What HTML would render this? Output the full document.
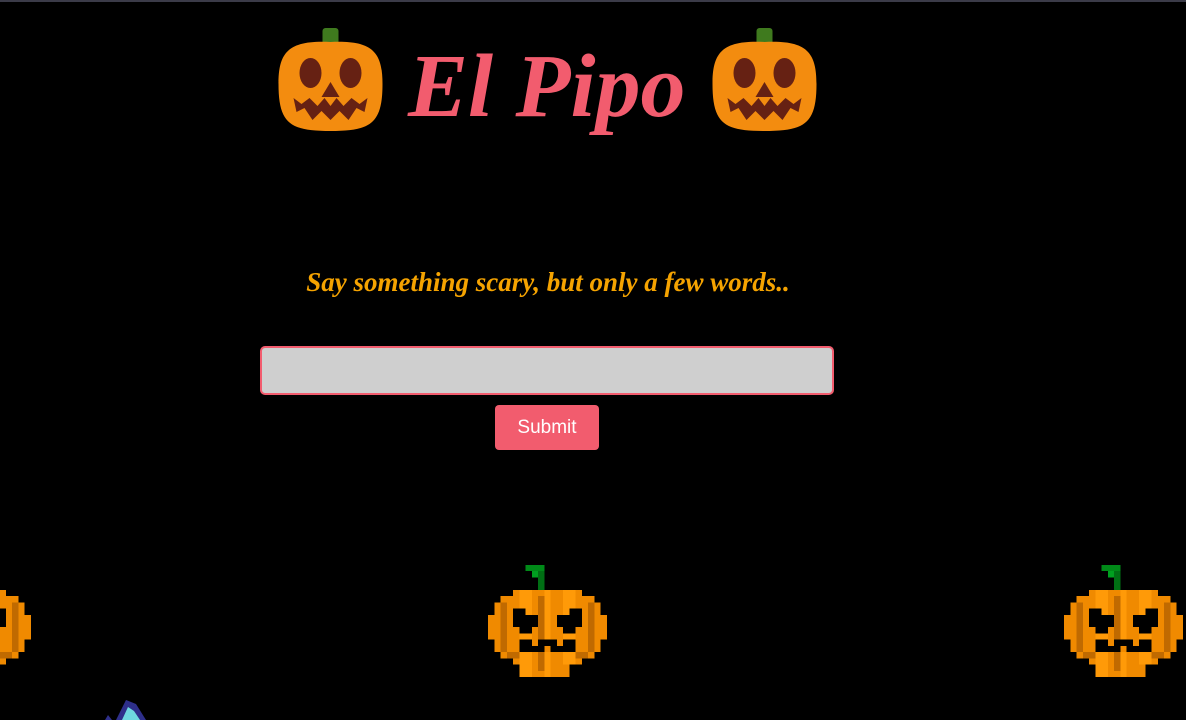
<!DOCTYPE html>
<html><head><meta charset="utf-8"><style>
html,body{margin:0;padding:0;background:#000;width:1186px;height:720px;overflow:hidden;position:relative;font-family:"Liberation Sans",sans-serif}
.top{position:absolute;left:0;top:0;width:1186px;height:2px;background:#3b3b48}
.t{position:absolute;left:408px;top:42px;font-family:"Liberation Serif",serif;font-style:italic;font-weight:bold;font-size:90px;color:#f25c6e;line-height:1;white-space:nowrap}
.sub{position:absolute;left:0;width:1096px;text-align:center;top:267px;font-family:"Liberation Serif",serif;font-style:italic;font-weight:bold;font-size:27px;color:#f5a300}
.inp{position:absolute;left:260px;top:346px;width:570px;height:45px;background:#cfcfcf;border:2px solid #f25c6e;border-radius:5px}
.btn{position:absolute;left:495px;top:405px;width:104px;height:45px;background:#f25c6e;border-radius:4px;color:#fff;font-size:19px;text-align:center;line-height:46px}
.pk{position:absolute;width:119px;height:112px;top:565px}
.em{position:absolute;top:28px;width:105px;height:104px}
</style></head><body>
<div class="top"></div>
<svg width="0" height="0" style="position:absolute">
<defs>
<g id="pump">
<rect x="6" y="0" width="3" height="1" fill="#008a18"/>
<rect x="8" y="1" width="1" height="3" fill="#006f14"/>
<rect x="7" y="1" width="1" height="1" fill="#00a020"/>
<g fill="#f08a00">
<rect x="4" y="4" width="11" height="1"/><rect x="2" y="5" width="15" height="1"/>
<rect x="1" y="6" width="17" height="2"/><rect x="0" y="8" width="19" height="4"/>
<rect x="1" y="12" width="17" height="2"/><rect x="2" y="14" width="15" height="1"/>
<rect x="4" y="15" width="11" height="1"/><rect x="6" y="16" width="7" height="2"/>
</g>
<g fill="#ff9a08">
<rect x="5" y="4" width="2" height="14"/><rect x="9" y="4" width="1" height="14"/><rect x="12" y="4" width="2" height="12"/>
</g>
<g fill="#c06a00">
<rect x="2" y="6" width="1" height="8"/><rect x="16" y="6" width="1" height="8"/><rect x="8" y="5" width="1" height="12"/>
<rect x="3" y="14" width="2" height="1"/><rect x="14" y="14" width="2" height="1"/>
</g>
<g fill="#000">
<rect x="4" y="7" width="2" height="3"/><rect x="6" y="8" width="2" height="2"/><rect x="5" y="10" width="2" height="1"/>
<rect x="13" y="7" width="2" height="3"/><rect x="11" y="8" width="2" height="2"/><rect x="12" y="10" width="2" height="1"/>
<rect x="5" y="12" width="9" height="2"/>
</g>
<g fill="#f08a00">
<rect x="7" y="12" width="1" height="1"/><rect x="11" y="12" width="1" height="1"/><rect x="9" y="13" width="1" height="1"/>
</g>
</g>
<g id="emo">
<rect x="44" y="0" width="16" height="18" rx="3" fill="#3f7a1e"/>
<path d="M52 14 C94 12 104 24 104 56 C104 96 92 103 52 103 C12 103 0 96 0 56 C0 24 10 12 52 14Z" fill="#f38c0f"/>
<ellipse cx="32" cy="45" rx="11" ry="15" fill="#662113"/>
<ellipse cx="72" cy="45" rx="11" ry="15" fill="#662113"/>
<path d="M52 54 L61 69 L43 69Z" fill="#662113"/>
<path d="M15 70 L23 76 L31 70 L39 78 L46 70 L52 78 L58 70 L65 78 L73 70 L81 76 L89 70 L86 84 L78 80 L70 92 L61 83 L52 92 L43 83 L34 92 L26 80 L18 84Z" fill="#662113"/>
</g>
</defs></svg>
<svg class="em" style="left:278px" viewBox="0 0 104 104"><use href="#emo"/></svg>
<svg class="em" style="left:712px" viewBox="0 0 104 104"><use href="#emo"/></svg>
<div class="t">El Pipo</div>
<div class="sub">Say something scary, but only a few words..</div>
<div class="inp"></div>
<div class="btn">Submit</div>
<svg class="pk" style="left:-88px" viewBox="0 0 19 18" preserveAspectRatio="none" shape-rendering="crispEdges"><use href="#pump"/></svg>
<svg class="pk" style="left:488px" viewBox="0 0 19 18" preserveAspectRatio="none" shape-rendering="crispEdges"><use href="#pump"/></svg>
<svg class="pk" style="left:1064px;width:119px" viewBox="0 0 19 18" preserveAspectRatio="none" shape-rendering="crispEdges"><use href="#pump"/></svg>
<svg style="position:absolute;left:100px;top:695px" width="60" height="25" viewBox="0 0 60 25">
<path d="M5 25 L8 20 L12 25Z" fill="#2e2f8a"/>
<path d="M16 25 L26 5 L36 9 L46 25Z" fill="#2e2f8a"/>
<path d="M22 25 L28 12 L34 16 L40 25Z" fill="#6fd8e0"/>
</svg>
</body></html>
